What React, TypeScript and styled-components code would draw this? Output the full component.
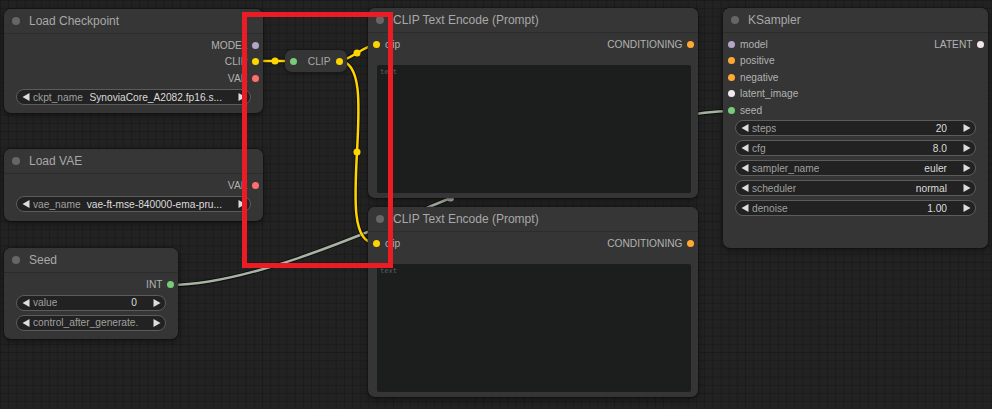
import React from "react";
import styled, { createGlobalStyle } from "styled-components";

const GlobalStyle = createGlobalStyle`
  html, body {
    margin: 0;
    padding: 0;
    background: #222;
  }
  body {
    font-family: "Liberation Sans", Arial, sans-serif;
  }
`;

const Canvas = styled.div`
  position: relative;
  width: 992px;
  height: 409px;
  overflow: hidden;
  background-color: #222222;
  background-image: linear-gradient(to right, #1b1b1b 1px, transparent 1px),
    linear-gradient(to bottom, #1b1b1b 1px, transparent 1px);
  background-size: 8.2px 8.2px;
`;

const Wires = styled.svg`
  position: absolute;
  left: 0;
  top: 0;
  pointer-events: none;
`;

const Node = styled.div<{ $x: number; $y: number; $w: number; $h: number }>`
  position: absolute;
  left: ${(p) => p.$x}px;
  top: ${(p) => p.$y}px;
  width: ${(p) => p.$w}px;
  height: ${(p) => p.$h}px;
  box-sizing: border-box;
  display: flex;
  flex-direction: column;
  background: #353535;
  border-radius: 7px;
  box-shadow: 0 0 0 1px rgba(0, 0, 0, 0.2), 0 2px 6px rgba(0, 0, 0, 0.45);
  overflow: hidden;
`;

const Title = styled.div`
  flex: none;
  height: 24.5px;
  box-sizing: border-box;
  display: flex;
  align-items: center;
  gap: 9px;
  padding-left: 8px;
  background: #363636;
  border-bottom: 1px solid #2c2c2c;
  color: #a8a8a8;
  font-size: 12px;
  white-space: nowrap;
`;

const TitleDot = styled.span`
  width: 8px;
  height: 8px;
  border-radius: 50%;
  background: #666;
  flex: none;
`;

const Body = styled.div`
  flex: 1;
  min-height: 0;
  display: flex;
  flex-direction: column;
  padding-top: 3.5px;
`;

const SlotRow = styled.div`
  flex: none;
  height: 16.5px;
  display: flex;
  align-items: center;
  font-size: 10.2px;
  color: #b2b2b2;
  white-space: nowrap;
`;

const Slot = styled.div<{ $out?: boolean }>`
  display: flex;
  align-items: center;
  flex-direction: ${(p) => (p.$out ? "row-reverse" : "row")};
  gap: ${(p) => (p.$out ? 4.5 : 5.5)}px;
  padding: ${(p) => (p.$out ? "0 4px 0 0" : "0 0 0 4.5px")};
  margin-left: ${(p) => (p.$out ? "auto" : "0")};
`;

const Dot = styled.span<{ $c: string }>`
  width: 7px;
  height: 7px;
  border-radius: 50%;
  background: ${(p) => p.$c};
  flex: none;
`;

const Widgets = styled.div<{ $top: number }>`
  display: flex;
  flex-direction: column;
  gap: 4px;
  margin: ${(p) => p.$top}px 12px 0;
`;

const Widget = styled.div`
  height: 16px;
  box-sizing: border-box;
  display: flex;
  align-items: center;
  padding: 0 4px;
  border: 1px solid #5c5c5c;
  border-radius: 8px;
  background: #222;
  font-size: 10.2px;
  white-space: nowrap;
  overflow: hidden;
`;

const Arrow = styled.svg`
  flex: none;
  fill: #dddddd;
`;

const WLabel = styled.span<{ $grow?: boolean }>`
  flex: ${(p) => (p.$grow ? "1 1 auto" : "0 1 auto")};
  min-width: 0;
  margin: 0 ${(p) => (p.$grow ? 14 : 0)}px 0 2px;
  color: #a0a0a0;
  overflow: hidden;
`;

const WValue = styled.span`
  flex: 1;
  min-width: 0;
  margin: 0 16px 0 4px;
  text-align: right;
  color: #dcdcdc;
  overflow: hidden;
`;

const TextArea = styled.div`
  flex: 1;
  margin: 12.5px 7px 5.5px 9px;
  padding: 3px 3px;
  background: #1c1d1d;
  border-radius: 2px;
  color: #5e5e5e;
  font-family: "DejaVu Sans Mono", monospace;
  font-size: 7px;
`;

const Reroute = styled.div`
  position: absolute;
  left: 285px;
  top: 50px;
  width: 62px;
  height: 22px;
  box-sizing: border-box;
  display: flex;
  align-items: center;
  padding: 0 4.5px;
  background: #353535;
  border-radius: 7px;
  box-shadow: 0 1px 4px rgba(0, 0, 0, 0.45);
  color: #a8a8a8;
  font-size: 10.2px;
`;

const RerouteLabel = styled.span`
  margin-left: auto;
  margin-right: 5px;
`;

const Highlight = styled.div`
  position: absolute;
  left: 242px;
  top: 12px;
  width: 151px;
  height: 256px;
  box-sizing: border-box;
  border: 5px solid #ec1c24;
`;

const C = {
  model: "#b4a4c8",
  clip: "#ffd500",
  vae: "#ff6e6e",
  cond: "#ffa931",
  latent: "#f1e8ee",
  int: "#78cc78",
};

type SlotDef = { label: string; color: string };

const Slots = ({ rows }: { rows: [SlotDef | null, SlotDef | null][] }) => (
  <>
    {rows.map(([inp, out], i) => (
      <SlotRow key={i}>
        {inp && (
          <Slot>
            <Dot $c={inp.color} />
            <span>{inp.label}</span>
          </Slot>
        )}
        {out && (
          <Slot $out>
            <Dot $c={out.color} />
            <span>{out.label}</span>
          </Slot>
        )}
      </SlotRow>
    ))}
  </>
);

const Field = ({ label, value }: { label: string; value?: string }) => (
  <Widget>
    <Arrow width="10" height="10" viewBox="0 0 10 10">
      <polygon points="1.5,5 8.5,1 8.5,9" />
    </Arrow>
    <WLabel $grow={value === undefined}>{label}</WLabel>
    {value !== undefined && <WValue>{value}</WValue>}
    <Arrow width="8" height="10" viewBox="0 0 8 10">
      <polygon points="0.5,1 7.5,5 0.5,9" />
    </Arrow>
  </Widget>
);

const Header = ({ children }: { children: React.ReactNode }) => (
  <Title>
    <TitleDot />
    {children}
  </Title>
);

const Link = ({ d, color }: { d: string; color: string }) => (
  <g fill="none" strokeLinecap="round">
    <path d={d} stroke="rgba(0,0,0,0.55)" strokeWidth={4.5} />
    <path d={d} stroke={color} strokeWidth={2.5} />
  </g>
);

export default function App() {
  return (
    <>
      <GlobalStyle />
      <Canvas>
        <Wires width="992" height="409" viewBox="0 0 992 409">
          <Link d="M170 285 C317 285 584 111 731 111" color="#a6b4a2" />
          <circle cx="450.5" cy="198" r="3.5" fill="#a6b4a2" />
          <Link d="M257 61 C266 61 284 61 293 61" color={C.clip} />
          <Link d="M339 61 C349 61 365 45 375 45" color={C.clip} />
          <Link d="M339 61 C385 61 329 243 375 243" color={C.clip} />
          <circle cx="275" cy="61" r="3.5" fill={C.clip} />
          <circle cx="357" cy="53" r="3.5" fill={C.clip} />
          <circle cx="357" cy="152" r="3.5" fill={C.clip} />
        </Wires>

        <Node $x={4} $y={9} $w={259} $h={104}>
          <Header>Load Checkpoint</Header>
          <Body>
            <Slots
              rows={[
                [null, { label: "MODEL", color: C.model }],
                [null, { label: "CLIP", color: C.clip }],
                [null, { label: "VAE", color: C.vae }],
              ]}
            />
            <Widgets $top={2.5}>
              <Field label="ckpt_name" value="SynoviaCore_A2082.fp16.s..." />
            </Widgets>
          </Body>
        </Node>

        <Node $x={4} $y={149} $w={259} $h={72}>
          <Header>Load VAE</Header>
          <Body>
            <Slots rows={[[null, { label: "VAE", color: C.vae }]]} />
            <Widgets $top={2.5}>
              <Field label="vae_name" value="vae-ft-mse-840000-ema-pru..." />
            </Widgets>
          </Body>
        </Node>

        <Node $x={4} $y={248} $w={174} $h={91}>
          <Header>Seed</Header>
          <Body>
            <Slots rows={[[null, { label: "INT", color: C.int }]]} />
            <Widgets $top={2}>
              <Field label="value" value="0" />
              <Field label="control_after_generate." />
            </Widgets>
          </Body>
        </Node>

        <Reroute>
          <Dot $c={C.int} />
          <RerouteLabel>CLIP</RerouteLabel>
          <Dot $c={C.clip} />
        </Reroute>

        <Node $x={368} $y={8} $w={330} $h={190}>
          <Header>CLIP Text Encode (Prompt)</Header>
          <Body>
            <Slots
              rows={[
                [
                  { label: "clip", color: C.clip },
                  { label: "CONDITIONING", color: C.cond },
                ],
              ]}
            />
            <TextArea>text</TextArea>
          </Body>
        </Node>

        <Node $x={368} $y={207} $w={330} $h={190}>
          <Header>CLIP Text Encode (Prompt)</Header>
          <Body>
            <Slots
              rows={[
                [
                  { label: "clip", color: C.clip },
                  { label: "CONDITIONING", color: C.cond },
                ],
              ]}
            />
            <TextArea>text</TextArea>
          </Body>
        </Node>

        <Node $x={723} $y={8} $w={265} $h={240}>
          <Header>KSampler</Header>
          <Body>
            <Slots
              rows={[
                [
                  { label: "model", color: C.model },
                  { label: "LATENT", color: C.latent },
                ],
                [{ label: "positive", color: C.cond }, null],
                [{ label: "negative", color: C.cond }, null],
                [{ label: "latent_image", color: C.latent }, null],
                [{ label: "seed", color: C.int }, null],
              ]}
            />
            <Widgets $top={1.5}>
              <Field label="steps" value="20" />
              <Field label="cfg" value="8.0" />
              <Field label="sampler_name" value="euler" />
              <Field label="scheduler" value="normal" />
              <Field label="denoise" value="1.00" />
            </Widgets>
          </Body>
        </Node>

        <Highlight />
      </Canvas>
    </>
  );
}
